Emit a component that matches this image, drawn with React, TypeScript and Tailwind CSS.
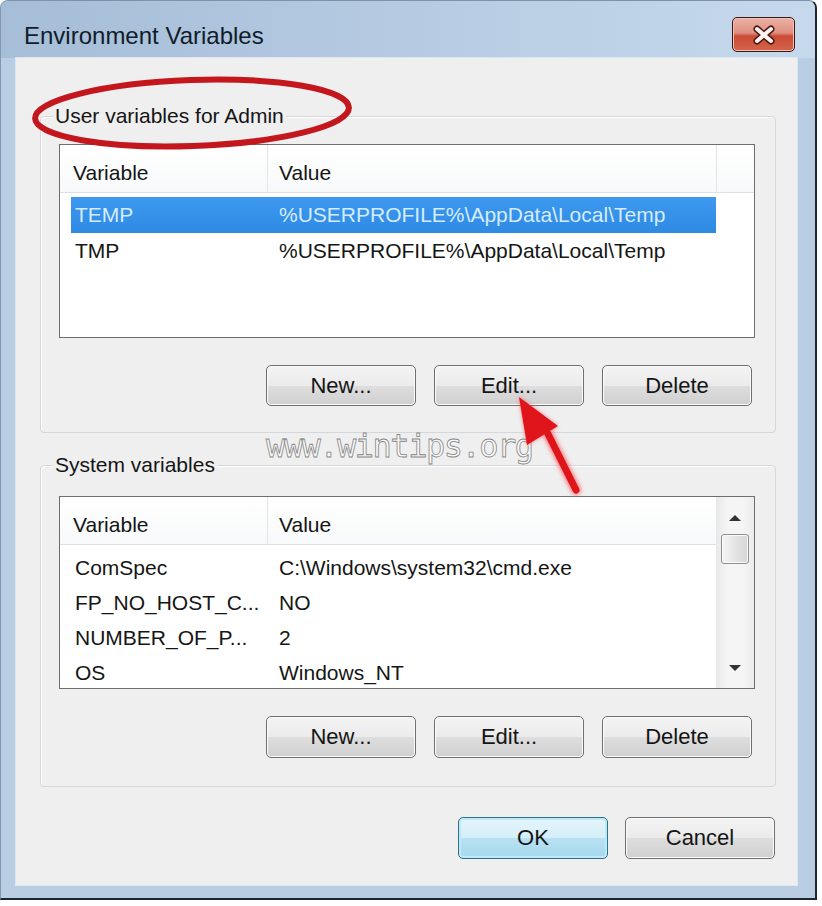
import React from 'react';

type Row = { name: string; value: string; selected?: boolean };

const userVars: Row[] = [
  { name: 'TEMP', value: '%USERPROFILE%\\AppData\\Local\\Temp', selected: true },
  { name: 'TMP', value: '%USERPROFILE%\\AppData\\Local\\Temp' },
];

const systemVars: Row[] = [
  { name: 'ComSpec', value: 'C:\\Windows\\system32\\cmd.exe' },
  { name: 'FP_NO_HOST_C...', value: 'NO' },
  { name: 'NUMBER_OF_P...', value: '2' },
  { name: 'OS', value: 'Windows_NT' },
];

const Button: React.FC<{ label: string; primary?: boolean; h?: string }> = ({ label, primary, h = 'h-[41px]' }) => (
  <button
    className={`w-[150px] ${h} rounded-[5px] border text-[22px] leading-none text-[#151515] ${
      primary
        ? 'border-[#2f6f88] bg-[linear-gradient(to_bottom,#e6f5fb_0%,#d4eef8_50%,#b8e2f2_50%,#a6d8ec_100%)] shadow-[inset_0_0_0_2px_#bdeaf8]'
        : 'border-[#6f6f6f] bg-[linear-gradient(to_bottom,#f3f3f3_0%,#ebebeb_50%,#dedede_50%,#d0d0d0_100%)] shadow-[inset_0_0_0_1px_#fbfbfb]'
    }`}
  >
    {label}
  </button>
);

const ListHeader: React.FC<{ filler?: boolean }> = ({ filler }) => (
  <div className="flex h-[48px] shrink-0 border-b border-[#dde1e6] bg-[linear-gradient(to_bottom,#ffffff,#f8f9fa)]">
    <div className="w-[208px] border-r border-[#e1e4e8] pl-[13px] pt-[16px] leading-[24px]">Variable</div>
    <div className={`${filler ? 'w-[449px] border-r border-[#e1e4e8]' : 'flex-1'} pl-[11px] pt-[16px] leading-[24px]`}>
      Value
    </div>
    {filler && <div className="flex-1" />}
  </div>
);

const ListRow: React.FC<{ row: Row; h: string }> = ({ row, h }) => (
  <div
    className={`ml-[11px] flex w-[645px] ${h} items-center leading-[24px] ${
      row.selected ? 'bg-[linear-gradient(to_bottom,#3d98ee,#2f8ae4)] text-[#d4ecff]' : 'text-[#151515]'
    }`}
  >
    <div className="w-[204px] whitespace-nowrap pl-[4px]">{row.name}</div>
    <div className="whitespace-nowrap pl-[4px]">{row.value}</div>
  </div>
);

const GroupBox: React.FC<{ label: string; h: string; children: React.ReactNode }> = ({ label, h, children }) => (
  <div className={`relative ${h} rounded-[4px] border border-[#d2d8de] shadow-[inset_1px_1px_0_#ffffff]`}>
    <span className="absolute -top-[13px] left-[12px] bg-[#efefef] px-[2px] text-[21px] leading-[24px] text-[#151515]">
      {label}
    </span>
    {children}
  </div>
);

const ScrollArrow: React.FC<{ down?: boolean }> = ({ down }) => (
  <svg width="14" height="8" viewBox="0 0 14 8">
    {down ? (
      <path d="M1 1 L13 1 L7 7 Z" fill="#333333" />
    ) : (
      <path d="M1 7 L7 1 L13 7 Z" fill="#333333" />
    )}
  </svg>
);

export default function App() {
  return (
    <div className="relative h-[906px] w-[822px] overflow-hidden bg-white font-['Liberation_Sans',Arial,sans-serif] text-[21px] text-[#151515]">
      <div className="flex h-[900px] w-[817px] flex-col rounded-t-[8px] border-b-2 border-l border-r-2 border-t border-b-[#1d2631] border-l-[#8298ae] border-r-[#1d2631] border-t-[#7d93a9] bg-[#b9cde3]">
        {/* title bar */}
        <div className="flex h-[57px] shrink-0 items-start justify-between rounded-t-[7px] bg-[linear-gradient(to_right,#a5bdd7,#b6cbe2_50%,#c6d9ec)]">
          <div className="pl-[23px] pt-[21px] text-[24px] leading-[28px] text-[#111c2a]">Environment Variables</div>
          <div className="mr-[20px] mt-[16px] flex h-[35px] w-[63px] items-center justify-center rounded-[5px] border border-[#3b1713] bg-[linear-gradient(to_bottom,#ebb2a6_0%,#df8f80_45%,#cb4a36_55%,#d4654b_100%)] shadow-[inset_0_0_0_1px_#f2c2b8]">
            <svg width="26" height="20" viewBox="0 0 26 20">
              <path d="M6 4 L20 16 M20 4 L6 16" stroke="#4a1a14" strokeWidth="7" strokeLinecap="round" />
              <path d="M6 4 L20 16 M20 4 L6 16" stroke="#fbf3f1" strokeWidth="4" strokeLinecap="round" />
            </svg>
          </div>
        </div>

        {/* client area */}
        <div className="ml-[15px] flex h-[827px] w-[781px] flex-col bg-[#efefef] pl-[24px] pr-[21px] pt-[58px] shadow-[0_0_0_1px_#dde7f1]">
          <GroupBox label="User variables for Admin" h="h-[317px]">
            <div className="ml-[18px] mt-[27px] flex h-[194px] w-[696px] flex-col overflow-hidden border border-[#6e6e6e] bg-white">
              <ListHeader filler />
              <div className="pt-[4px]">
                {userVars.map((r) => (
                  <ListRow key={r.name} row={r} h="h-[36px]" />
                ))}
              </div>
            </div>
            <div className="mt-[27px] flex justify-end gap-[18px] pr-[23px]">
              <Button label="New..." />
              <Button label="Edit..." />
              <Button label="Delete" />
            </div>
          </GroupBox>

          <div className="mt-[32px]">
            <GroupBox label="System variables" h="h-[322px]">
              <div className="ml-[18px] mt-[30px] flex h-[193px] w-[696px] overflow-hidden border border-[#6e6e6e] bg-white">
                <div className="flex w-[656px] flex-col">
                  <ListHeader />
                  <div className="pt-[5px]">
                    {systemVars.map((r) => (
                      <ListRow key={r.name} row={r} h="h-[35px]" />
                    ))}
                  </div>
                </div>
                <div className="flex w-[38px] flex-col items-center bg-[linear-gradient(to_right,#e8e8e8,#f5f5f5_30%,#f5f5f5_70%,#ececec)] pt-[17px]">
                  <ScrollArrow />
                  <div className="mt-[12px] h-[30px] w-[28px] rounded-[3px] border border-[#8f8f8f] bg-[linear-gradient(to_right,#f6f6f6,#e4e4e4_50%,#d6d6d6)] shadow-[inset_0_0_0_1px_#fafafa]" />
                  <div className="flex-1" />
                  <div className="pb-[16px]">
                    <ScrollArrow down />
                  </div>
                </div>
              </div>
              <div className="mt-[27px] flex justify-end gap-[18px] pr-[23px]">
                <Button label="New..." h="h-[42px]" />
                <Button label="Edit..." h="h-[42px]" />
                <Button label="Delete" h="h-[42px]" />
              </div>
            </GroupBox>
          </div>

          <div className="mt-[30px] flex justify-end gap-[17px] pr-[1px]">
            <Button label="OK" primary h="h-[42px]" />
            <Button label="Cancel" h="h-[42px]" />
          </div>
        </div>
      </div>

      {/* watermark */}
      <div className="pointer-events-none absolute left-[266px] top-[430px] font-['DejaVu_Sans_Mono',monospace] text-[32px] leading-[32px] tracking-[-1.5px] text-[#f8f8f8] [-webkit-text-stroke:0.8px_#858585]">
        www.wintips.org
      </div>

      {/* red annotations */}
      <svg className="pointer-events-none absolute left-0 top-0" width="822" height="906" viewBox="0 0 822 906">
        <defs>
          <filter id="glow" x="-20%" y="-20%" width="140%" height="140%">
            <feGaussianBlur stdDeviation="2" />
          </filter>
        </defs>
        <ellipse cx="192" cy="113" rx="157" ry="33" fill="none" stroke="#c3161d" strokeWidth="6" transform="rotate(-2 192 113)" />
        <g filter="url(#glow)" opacity="0.6">
          <path d="M548 434 L576 490" stroke="#ff3b3b" strokeWidth="10" strokeLinecap="round" />
          <path d="M519 397 L558 426 L527 445 Z" fill="#ff3b3b" />
        </g>
        <path d="M548 434 L576 490" stroke="#e0151c" strokeWidth="7" strokeLinecap="round" />
        <path d="M519 397 L558 426 L527 445 Z" fill="#e0151c" />
      </svg>
    </div>
  );
}
